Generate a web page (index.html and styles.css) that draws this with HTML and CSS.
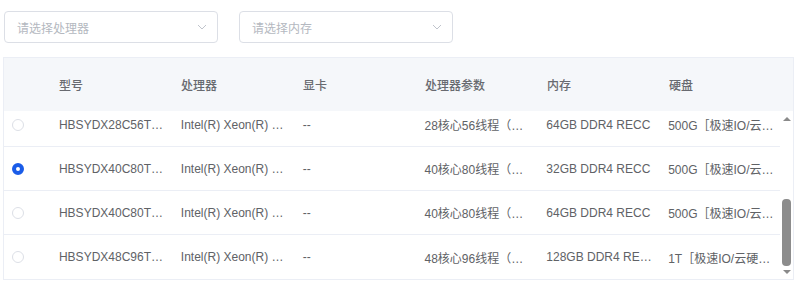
FILE: index.html
```html
<!DOCTYPE html>
<html lang="zh-CN">
<head>
    <meta charset="UTF-8">
    <title>选择机型</title>
    <link rel="stylesheet" href="styles.css">
</head>
<body>
    <div class="page">
        <div class="filters">
            <div class="select">
                <span class="placeholder">请选择处理器</span>
                <svg class="chevron" width="10" height="6" viewBox="0 0 10 6"><path d="M1 1l4 4 4-4" fill="none" stroke="#c0c4cc" stroke-width="1"/></svg>
            </div>
            <div class="select">
                <span class="placeholder">请选择内存</span>
                <svg class="chevron" width="10" height="6" viewBox="0 0 10 6"><path d="M1 1l4 4 4-4" fill="none" stroke="#c0c4cc" stroke-width="1"/></svg>
            </div>
        </div>

        <div class="table">
            <div class="thead">
                <div class="cell sel"></div>
                <div class="cell">型号</div>
                <div class="cell">处理器</div>
                <div class="cell">显卡</div>
                <div class="cell">处理器参数</div>
                <div class="cell">内存</div>
                <div class="cell">硬盘</div>
            </div>
            <div class="tbody">
                <div class="rows-view">
                    <div class="rows">
                        <div class="row">
                            <div class="cell sel"><span class="radio"></span></div>
                            <div class="cell">HBSYDX28C56T1280G</div>
                            <div class="cell">Intel(R) Xeon(R) Gold 6330</div>
                            <div class="cell">--</div>
                            <div class="cell">28核心56线程（主频2.0GHz）</div>
                            <div class="cell">64GB DDR4 RECC</div>
                            <div class="cell">500G［极速IO/云硬盘］</div>
                        </div>
                        <div class="row">
                            <div class="cell sel"><span class="radio checked"></span></div>
                            <div class="cell">HBSYDX40C80T1280G</div>
                            <div class="cell">Intel(R) Xeon(R) Gold 6248</div>
                            <div class="cell">--</div>
                            <div class="cell">40核心80线程（主频2.5GHz）</div>
                            <div class="cell">32GB DDR4 RECC</div>
                            <div class="cell">500G［极速IO/云硬盘］</div>
                        </div>
                        <div class="row">
                            <div class="cell sel"><span class="radio"></span></div>
                            <div class="cell">HBSYDX40C80T1280G</div>
                            <div class="cell">Intel(R) Xeon(R) Gold 6248</div>
                            <div class="cell">--</div>
                            <div class="cell">40核心80线程（主频2.5GHz）</div>
                            <div class="cell">64GB DDR4 RECC</div>
                            <div class="cell">500G［极速IO/云硬盘］</div>
                        </div>
                        <div class="row">
                            <div class="cell sel"><span class="radio"></span></div>
                            <div class="cell">HBSYDX48C96T1280G</div>
                            <div class="cell">Intel(R) Xeon(R) Gold 6342</div>
                            <div class="cell">--</div>
                            <div class="cell">48核心96线程（主频2.8GHz）</div>
                            <div class="cell">128GB DDR4 RECC</div>
                            <div class="cell">1T［极速IO/云硬盘］</div>
                        </div>
                    </div>
                </div>
                <div class="scrollbar">
                    <span class="arrow up"></span>
                    <span class="thumb"></span>
                    <span class="arrow down"></span>
                </div>
            </div>
        </div>
    </div>
</body>
</html>
```

FILE: styles.css
```css
body {
    margin: 0;
    background: #fff;
    font-family: "Liberation Sans", "Noto Sans CJK SC", sans-serif;
    font-size: 12px;
    color: #606266;
}
.page {
    padding: 11px 6px 0 3px;
}
.filters {
    display: flex;
    gap: 21px;
    padding-left: 1px;
}
.select {
    box-sizing: border-box;
    width: 214px;
    height: 32px;
    border: 1px solid #dcdfe6;
    border-radius: 4px;
    display: flex;
    align-items: center;
    justify-content: space-between;
    padding: 0 10px 0 12px;
}
.placeholder {
    color: #b4b8c0;
}
.table {
    margin-top: 14px;
    border: 1px solid #ebeef5;
}
.thead {
    display: flex;
    height: 53px;
    align-items: center;
    background: #f5f7fa;
    font-weight: 500;
    color: #686a70;
}
.cell {
    box-sizing: border-box;
    width: 122px;
    padding: 0 4px 0 10px;
    white-space: nowrap;
    overflow: hidden;
    text-overflow: ellipsis;
}
.cell.sel {
    width: 45px;
    padding: 0 0 0 8px;
    display: flex;
}
.tbody {
    display: flex;
}
.rows-view {
    width: 777px;
    height: 168px;
    overflow: hidden;
}
.rows {
    margin-top: -8px;
}
.row {
    display: flex;
    align-items: center;
    height: 44px;
    border-bottom: 1px solid #ebeef5;
    box-sizing: border-box;
}
.row:last-child {
    border-bottom: none;
}
.radio {
    box-sizing: border-box;
    width: 12px;
    height: 12px;
    border: 1px solid #dcdfe6;
    border-radius: 50%;
    background: #fff;
}
.radio.checked {
    border: 4px solid #1a5ce8;
    background: #fff;
}
.scrollbar {
    width: 13px;
    display: flex;
    flex-direction: column;
    align-items: center;
    padding-top: 6px;
}
.arrow {
    width: 0;
    height: 0;
    border-left: 4px solid transparent;
    border-right: 4px solid transparent;
}
.arrow.up {
    border-bottom: 4px solid #8a8a8a;
}
.arrow.down {
    border-top: 4px solid #8a8a8a;
    margin-top: 4px;
}
.thumb {
    width: 9px;
    height: 67px;
    margin-top: 78px;
    border-radius: 4px;
    background: #8c8c8c;
}
```
